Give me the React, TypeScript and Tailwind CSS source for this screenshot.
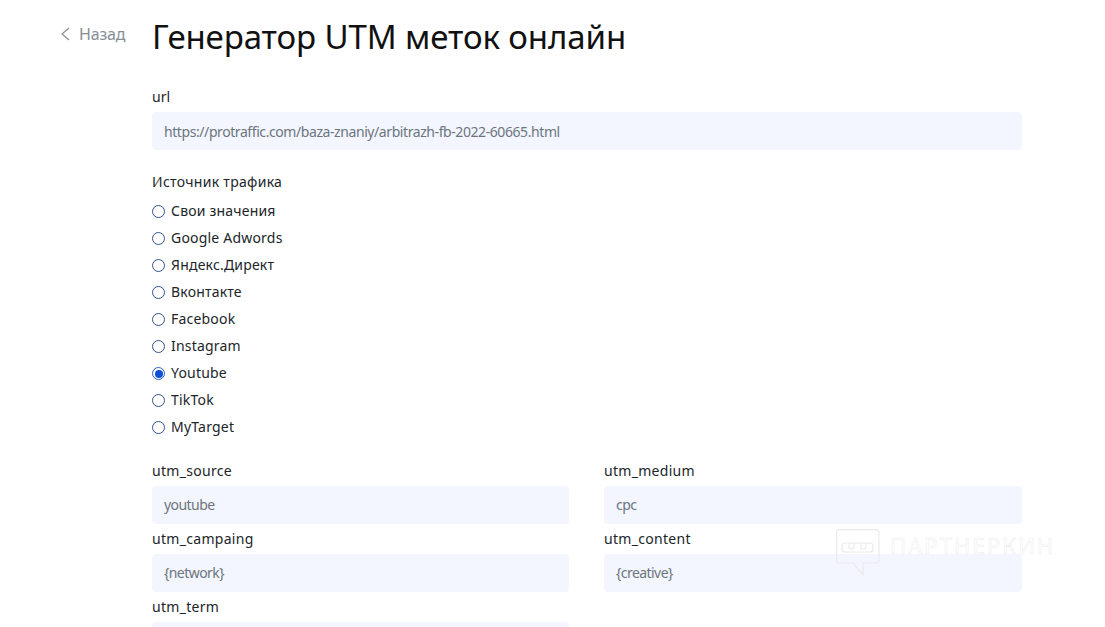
const sources = ['Свои значения', 'Google Adwords', 'Яндекс.Директ', 'Вконтакте', 'Facebook', 'Instagram', 'Youtube', 'TikTok', 'MyTarget'];

const fields = [
  { label: 'utm_source', value: 'youtube' },
  { label: 'utm_medium', value: 'cpc' },
  { label: 'utm_campaing', value: '{network}' },
  { label: 'utm_content', value: '{creative}' },
  { label: 'utm_term', value: '' },
];

function Field({ label, value }: { label: string; value: string }) {
  return (
    <div className="flex flex-col">
      <label className="h-[25px] text-[14px] leading-[20px] tracking-[0.3px] text-[#212529]">{label}</label>
      <input
        readOnly
        value={value}
        className="h-[38px] w-full rounded-[4px] bg-[#f3f6ff] px-3 pb-[2px] text-[14px] tracking-[-0.55px] text-[#6c757d] outline-none"
      />
    </div>
  );
}

export default function App() {
  return (
    <div className="relative h-[627px] overflow-hidden bg-white font-['Noto_Sans',sans-serif] text-[#212529]">
      <div className="flex">
        {/* Back link */}
        <div className="w-[152px] shrink-0 pl-[60px] pt-[24px]">
          <a className="flex items-center gap-[9px] text-[16px] leading-[20px] tracking-[-0.2px] text-[#868e96]">
            <svg width="10" height="14" viewBox="0 0 10 14" fill="none" stroke="#868e96" strokeWidth="1.2">
              <path d="M9 1 L2 7 L9 13" />
            </svg>
            Назад
          </a>
        </div>

        <main className="w-[870px] pt-[14px]">
          <h1 className="h-[46px] text-[33px] leading-[46px] tracking-[-0.1px] text-[#111]">Генератор UTM меток онлайн</h1>

          <div className="mt-[27px] flex flex-col">
            <label className="h-[25px] text-[14px] leading-[20px] text-[#212529]">url</label>
            <input
              readOnly
              value="https://protraffic.com/baza-znaniy/arbitrazh-fb-2022-60665.html"
              className="h-[38px] w-full rounded-[4px] bg-[#f3f6ff] px-3 text-[14px] tracking-[-0.42px] text-[#6c757d] outline-none"
            />
          </div>

          <div className="mt-[22px] h-[20px] text-[14px] leading-[20px] tracking-[0.3px]">Источник трафика</div>
          <div className="mt-[5px] flex flex-col">
            {sources.map((s) => (
              <label key={s} className="flex h-[27px] items-center gap-[6px] text-[14px] tracking-[0.2px]">
                {s === 'Youtube' ? (
                  <span className="mt-[2px] flex h-[13px] w-[13px] items-center justify-center rounded-full border-[1.4px] border-[#2f5fc4] bg-white">
                    <span className="h-[8px] w-[8px] rounded-full bg-[#0d4fd8]" />
                  </span>
                ) : (
                  <span className="mt-[2px] h-[13px] w-[13px] rounded-full border-[1.4px] border-[#34528f] bg-white" />
                )}
                {s}
              </label>
            ))}
          </div>

          <div className="mt-[21px] grid grid-cols-[417px_418px] gap-x-[35px] gap-y-[5px]">
            {fields.map((f) => (
              <Field key={f.label} label={f.label} value={f.value} />
            ))}
          </div>
        </main>
      </div>

      {/* Watermark */}
      <div className="absolute left-[836px] top-[529px] flex items-start gap-[10px]">
        <svg width="44" height="47" viewBox="0 0 44 47" fill="none" stroke="#e9e9e9" strokeWidth="1.1">
          <path d="M3 0.6 H40 Q43 0.6 43 3.6 V31 Q43 34 40 34 H27 V46 L17 34 H3 Q0.6 34 0.6 31 V3.6 Q0.6 0.6 3 0.6 Z" />
          <rect x="6" y="14" width="31" height="9" rx="3" />
          <path d="M13 14 V18 Q13 20 15 20 H16 Q18 20 18 18 V14 M25 14 V18 Q25 20 27 20 H28 Q30 20 30 18 V14" />
        </svg>
        <span className="mt-[3px] text-[22px] leading-[26px] tracking-[2.1px] text-transparent [-webkit-text-stroke:0.5px_#ededed]">ПАРТНЕРКИН</span>
      </div>
    </div>
  );
}
